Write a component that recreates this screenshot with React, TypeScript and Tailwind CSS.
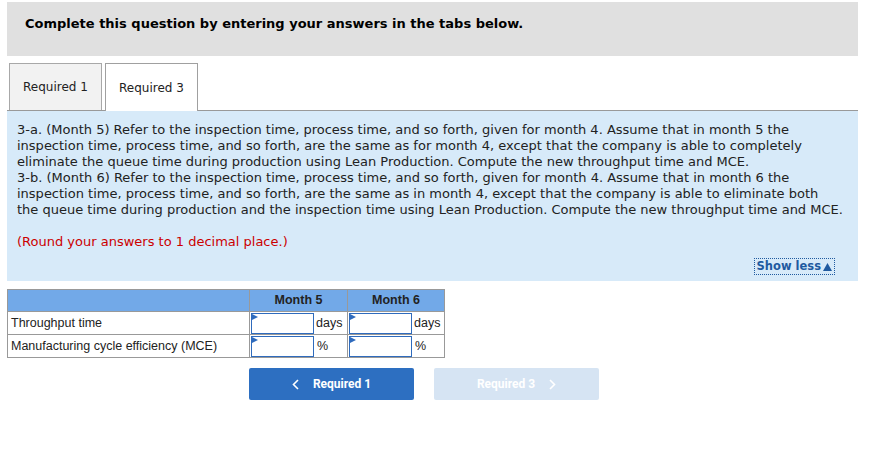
import React from "react";

function AnswerInput() {
  return (
    <div className="relative w-[63px] h-[21px] border border-[#2f6bbd] bg-white">
      <svg className="absolute left-0 top-0" width="6" height="7" viewBox="0 0 6 7">
        <polygon points="0,0 6,3 0,6" fill="#2f6bbd" />
      </svg>
    </div>
  );
}

export default function App() {
  const verdana = { fontFamily: '"DejaVu Sans", Verdana, sans-serif' };
  return (
    <div className="w-[876px] h-[469px] bg-white text-black" style={verdana}>
      <div className="pt-[2px] pl-[7px]">
        <div className="w-[851px] h-[54px] bg-[#e0e0e0] flex items-start pt-[14px] pl-[18px]">
          <span className="font-bold text-[13px] leading-[16px]">Complete this question by entering your answers in the tabs below.</span>
        </div>

        <div className="mt-[7px] w-[851px] flex items-end pl-[2px] gap-[3px] border-b border-[#999999]">
          <div className="w-[93px] h-[47px] bg-[#f2f2f2] border border-[#a8a8a8] border-b-0 flex items-center justify-center text-[12px] text-[#222]">
            Required 1
          </div>
          <div className="w-[93px] h-[48px] -mb-px bg-white border border-[#a0a0a0] border-b-0 flex items-center justify-center text-[12px] text-[#222]">
            Required 3
          </div>
        </div>

        <div className="w-[851px] h-[170px] bg-[#d7eaf9] pl-[10px] pt-[11px] pr-[23px] flex flex-col">
          <p className="text-[13px] leading-[16px] text-[#222] whitespace-nowrap">
            3-a. (Month 5) Refer to the inspection time, process time, and so forth, given for month 4. Assume that in month 5 the<br />
            inspection time, process time, and so forth, are the same as for month 4, except that the company is able to completely<br />
            eliminate the queue time during production using Lean Production. Compute the new throughput time and MCE.<br />
            3-b. (Month 6) Refer to the inspection time, process time, and so forth, given for month 4. Assume that in month 6 the<br />
            inspection time, process time, and so forth, are the same as in month 4, except that the company is able to eliminate both<br />
            the queue time during production and the inspection time using Lean Production. Compute the new throughput time and MCE.
          </p>
          <p className="mt-[16px] text-[13px] leading-[16px] text-[#cc0000]">(Round your answers to 1 decimal place.)</p>
          <div className="mt-[8px] flex justify-end">
            <span className="border border-dotted border-[#1f5aa0] px-[2px] h-[17px] flex items-center gap-[2px] text-[11.5px] font-bold text-[#1f5aa0]">
              Show less
              <svg width="9" height="8" viewBox="0 0 9 8"><polygon points="4.5,0 9,8 0,8" fill="#1f5aa0" /></svg>
            </span>
          </div>
        </div>

        <div className="mt-[8px]" style={{ fontFamily: '"Liberation Sans", Arial, sans-serif' }}>
          <div className="w-[438px] border border-[#999999] text-[12.5px] text-[#222]">
            <div className="flex h-[22px] bg-[#72a9e8] border-b border-[#999999]">
              <div className="w-[242px] border-r border-[#999999]"></div>
              <div className="w-[98px] border-r border-[#999999] flex items-center justify-center font-bold">Month 5</div>
              <div className="flex-1 flex items-center justify-center font-bold">Month 6</div>
            </div>
            <div className="flex h-[23px] border-b border-[#999999]">
              <div className="w-[242px] border-r border-[#999999] flex items-center pl-[3px]">Throughput time</div>
              <div className="w-[98px] border-r border-[#999999] flex items-center">
                <div className="pl-px"><AnswerInput /></div>
                <span className="pl-[2px]">days</span>
              </div>
              <div className="flex-1 flex items-center">
                <div className="pl-px"><AnswerInput /></div>
                <span className="pl-[2px]">days</span>
              </div>
            </div>
            <div className="flex h-[22px]">
              <div className="w-[242px] border-r border-[#999999] flex items-center pl-[3px]">Manufacturing cycle efficiency (MCE)</div>
              <div className="w-[98px] border-r border-[#999999] flex items-center">
                <div className="pl-px"><AnswerInput /></div>
                <span className="pl-[3px]">%</span>
              </div>
              <div className="flex-1 flex items-center">
                <div className="pl-px"><AnswerInput /></div>
                <span className="pl-[3px]">%</span>
              </div>
            </div>
          </div>
        </div>

        <div className="mt-[10px] pl-[242px] flex gap-[20px]" style={{ fontFamily: 'Roboto, Inter, sans-serif' }}>
          <div className="w-[165px] h-[32px] rounded-[2px] bg-[#2d6fc1] flex items-center justify-center gap-[14px] text-white text-[12px] font-bold">
            <svg width="7" height="11" viewBox="0 0 7 11"><polyline points="6,1 1.5,5.5 6,10" fill="none" stroke="white" strokeWidth="1.6" /></svg>
            <span>Required 1</span>
          </div>
          <div className="w-[165px] h-[32px] rounded-[2px] bg-[#d6e4f3] flex items-center justify-center gap-[14px] text-white text-[12px] font-bold">
            <span>Required 3</span>
            <svg width="7" height="11" viewBox="0 0 7 11"><polyline points="1,1 5.5,5.5 1,10" fill="none" stroke="white" strokeWidth="1.6" /></svg>
          </div>
        </div>
      </div>
    </div>
  );
}
